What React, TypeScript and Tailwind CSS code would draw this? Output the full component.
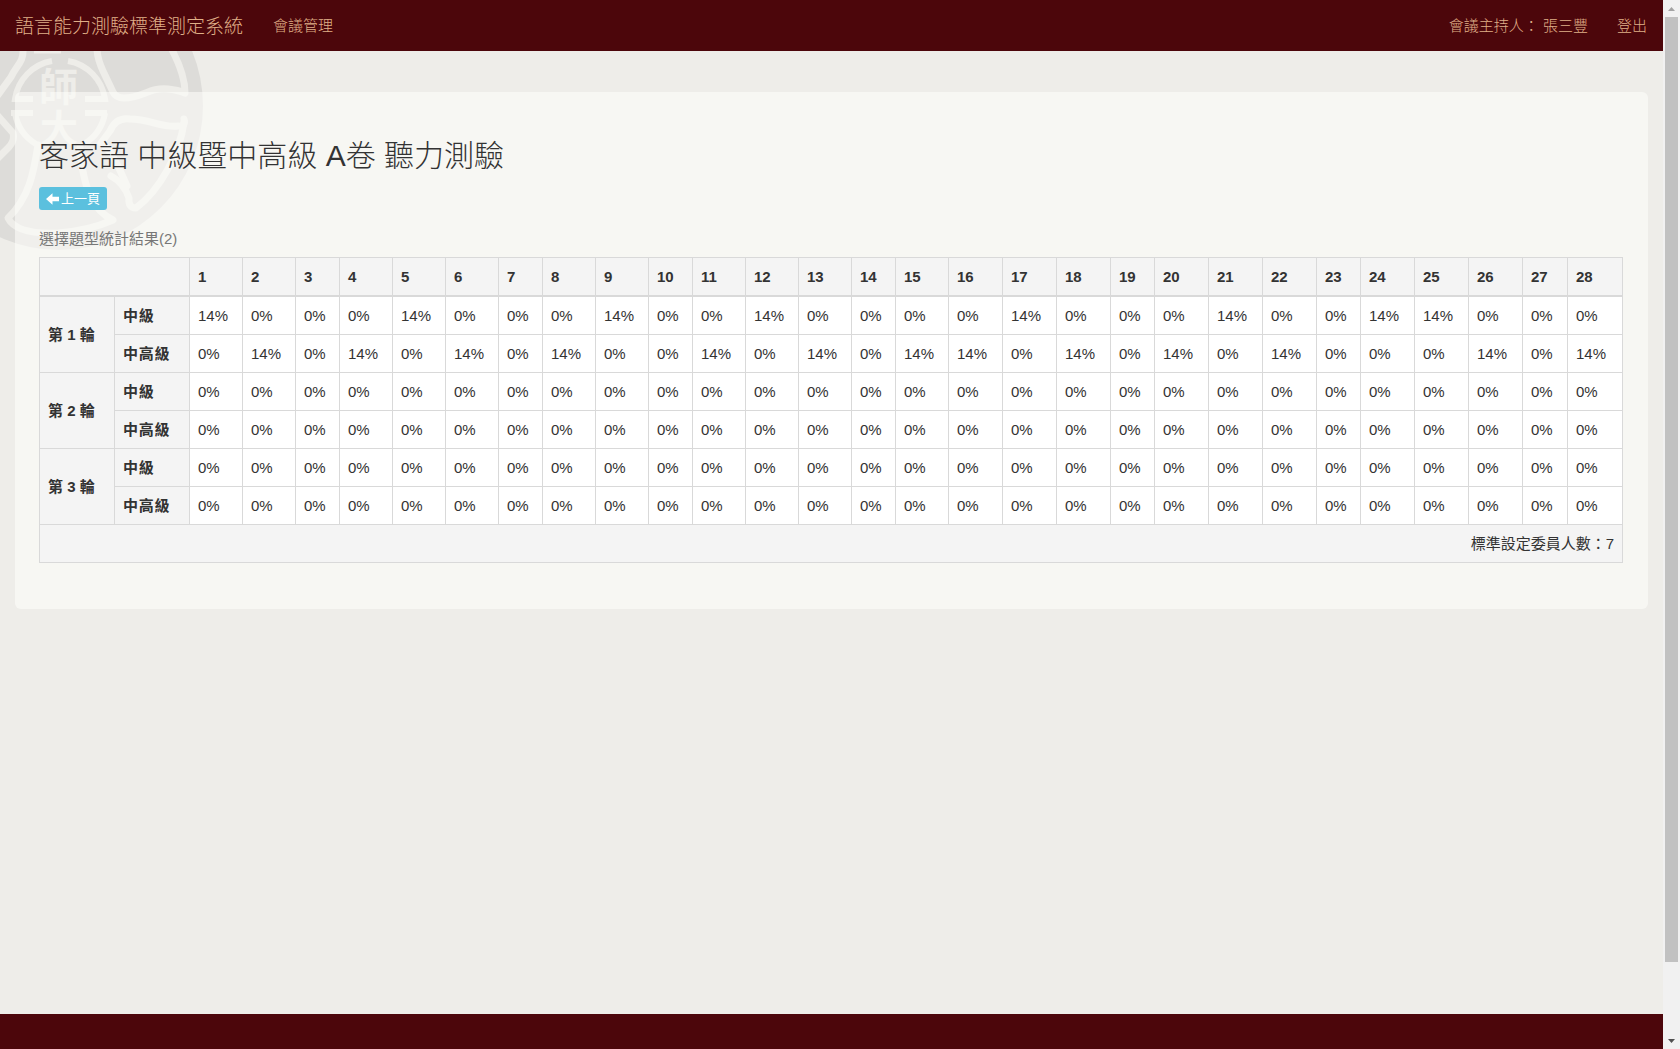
const COLUMN_WIDTHS = [
  53, 53, 44, 53, 53, 53, 44, 53, 53, 44, 53, 53, 53, 44, 53, 54, 54, 54, 44, 54, 54, 54, 44, 54, 54, 54, 45, 55,
];

const NONE: number[] = [];

const ROUNDS = [
  { name: '第 1 輪', middle: [1, 5, 9, 12, 17, 21, 24, 25], upper: [2, 4, 6, 8, 11, 13, 15, 16, 18, 20, 22, 26, 28] },
  { name: '第 2 輪', middle: NONE, upper: NONE },
  { name: '第 3 輪', middle: NONE, upper: NONE },
];

function Emblem() {
  return (
    <svg className="absolute left-0 top-[51px] text-[#eeede9]" width="210" height="205" viewBox="0 51 210 205" fill="none">
      <circle cx="59" cy="106" r="144" fill="#dddcd9" />
      <g stroke="currentColor" strokeWidth="7" strokeLinecap="round" strokeLinejoin="round">
        <path d="M97 48 Q97 58 103 71 L113 92 Q116 98 124 98 C142 98 150 87 168 89 Q178 90 185 93 Q185 74 171 48" />
        <path d="M184 119 Q186 127 178 126 C162 128 150 119 130 119 Q116 117 110 131 L101 143 C112 150 118 166 127 186" />
        <path d="M184 122 C180 153 160 190 136 208 Q128 208 129 198 Q124 183 111 176" />
        <path d="M38 145 C34 170 30 197 8 218 C14 230 34 234 58 233 Q88 231 113 220 C94 211 83 190 80 147" />
        <path d="M23 49 C24 62 16 66 11 77 L-2 95 M-2 116 L13 133 Q15 140 9 147 L-2 158" />
      </g>
      <g stroke="currentColor" strokeWidth="6">
        <path d="M52 61 A45 45 0 0 0 15 99 H33 M68 61 A45 45 0 0 1 105 99 H85" />
        <path d="M11 113 H33 M15 113 A45 45 0 0 0 36 144 M107 113 H85 M105 113 A45 45 0 0 1 84 144" />
        <path d="M34 52 H61" strokeWidth="3" />
      </g>
      <text x="39" y="101" fill="currentColor" className="font-['Noto_Sans_CJK_TC',sans-serif] text-[39px] font-bold">師</text>
      <text x="40" y="142" fill="currentColor" className="font-['Noto_Sans_CJK_TC',sans-serif] text-[38px] font-bold">大</text>
    </svg>
  );
}

function Navbar() {
  return (
    <header className="relative flex h-[51px] shrink-0 items-center bg-[#4c060b] px-[15px] font-light text-[#e0b088]">
      <span className="pt-[2px] text-[19px] leading-[20px]">語言能力測驗標準測定系統</span>
      <nav className="ml-[30px]">會議管理</nav>
      <div className="ml-auto flex gap-[29px] pr-px">
        <span>會議主持人： 張三豐</span>
        <span>登出</span>
      </div>
    </header>
  );
}

function ResultRow({ label, marked, round }: { label: string; marked: number[]; round?: string }) {
  return (
    <tr className="h-[38px] first:h-[39px]">
      {round && (
        <th rowSpan={2} className="border border-[#d9d9d9] bg-[#f4f4f4] px-2 text-left font-bold">
          {round}
        </th>
      )}
      <th className="border border-[#d9d9d9] bg-[#f4f4f4] px-2 text-left font-bold tracking-[0.7px]">{label}</th>
      {COLUMN_WIDTHS.map((_, i) => (
        <td key={i} className="border border-[#d9d9d9] bg-white px-2">
          {marked.includes(i + 1) ? '14%' : '0%'}
        </td>
      ))}
    </tr>
  );
}

function ResultTable() {
  return (
    <table className="w-[1584px] table-fixed border-collapse whitespace-nowrap leading-[21px]">
      <colgroup>
        <col className="w-[75px]" />
        <col className="w-[75px]" />
        {COLUMN_WIDTHS.map((width, i) => (
          <col key={i} style={{ width }} />
        ))}
      </colgroup>
      <thead>
        <tr className="h-[38px]">
          <th colSpan={2} className="border border-b-2 border-[#d9d9d9] bg-[#f4f4f4]" />
          {COLUMN_WIDTHS.map((_, i) => (
            <th key={i} className="border border-b-2 border-[#d9d9d9] bg-[#f4f4f4] px-2 text-left font-bold">
              {i + 1}
            </th>
          ))}
        </tr>
      </thead>
      <tbody>
        {ROUNDS.flatMap((r) => [
          <ResultRow key={r.name + 'm'} round={r.name} label="中級" marked={r.middle} />,
          <ResultRow key={r.name + 'u'} label="中高級" marked={r.upper} />,
        ])}
      </tbody>
      <tfoot>
        <tr className="h-[38px]">
          <td colSpan={30} className="border border-[#d9d9d9] bg-[#f4f4f4] px-2 text-right">
            標準設定委員人數：7
          </td>
        </tr>
      </tfoot>
    </table>
  );
}

function Scrollbar() {
  return (
    <div className="flex w-[17px] shrink-0 flex-col items-center bg-[#f1f1f1]">
      <div className="flex h-[17px] items-center">
        <svg width="7" height="4" viewBox="0 0 7 4"><path d="M0 4 L3.5 0 L7 4Z" fill="#a3a3a3" /></svg>
      </div>
      <div className="h-[945px] w-[13px] bg-[#c1c1c1]" />
      <div className="mt-auto flex h-[17px] items-center">
        <svg width="7" height="4" viewBox="0 0 7 4"><path d="M0 0 L3.5 4 L7 0Z" fill="#505050" /></svg>
      </div>
    </div>
  );
}

export default function App() {
  return (
    <div className="flex h-[1049px] w-[1680px] overflow-hidden bg-[#eeede9] font-['Liberation_Sans','Noto_Sans_CJK_TC',sans-serif] text-[15px] leading-[21px] text-[#333333]">
      <div className="relative flex w-[1663px] flex-col">
        <Emblem />
        <Navbar />
        <main className="relative mx-[15px] mt-[41px] h-[517px] rounded-[6px] bg-[#fffffc]/55 pl-6 pt-[46px]">
          <h1 className="h-[33px] text-[30px] font-light leading-[35px]">客家語 中級暨中高級 A卷 聽力測驗</h1>
          <button className="mt-[16px] flex h-[23px] w-[68px] items-center gap-[2px] rounded-[3px] bg-[#5bc0de] pl-[7px] text-[13px] leading-[18px] text-white">
            <svg width="13" height="12" viewBox="0 0 13 12" fill="currentColor"><path d="M0 6 L6.5 0.3 V3.7 H13 V8.3 H6.5 V11.7Z" /></svg>
            上一頁
          </button>
          <p className="mt-[18px] h-[29px] text-[#777777]">選擇題型統計結果(2)</p>
          <ResultTable />
        </main>
        <footer className="mt-auto h-[35px] bg-[#4c060b]" />
      </div>
      <Scrollbar />
    </div>
  );
}
